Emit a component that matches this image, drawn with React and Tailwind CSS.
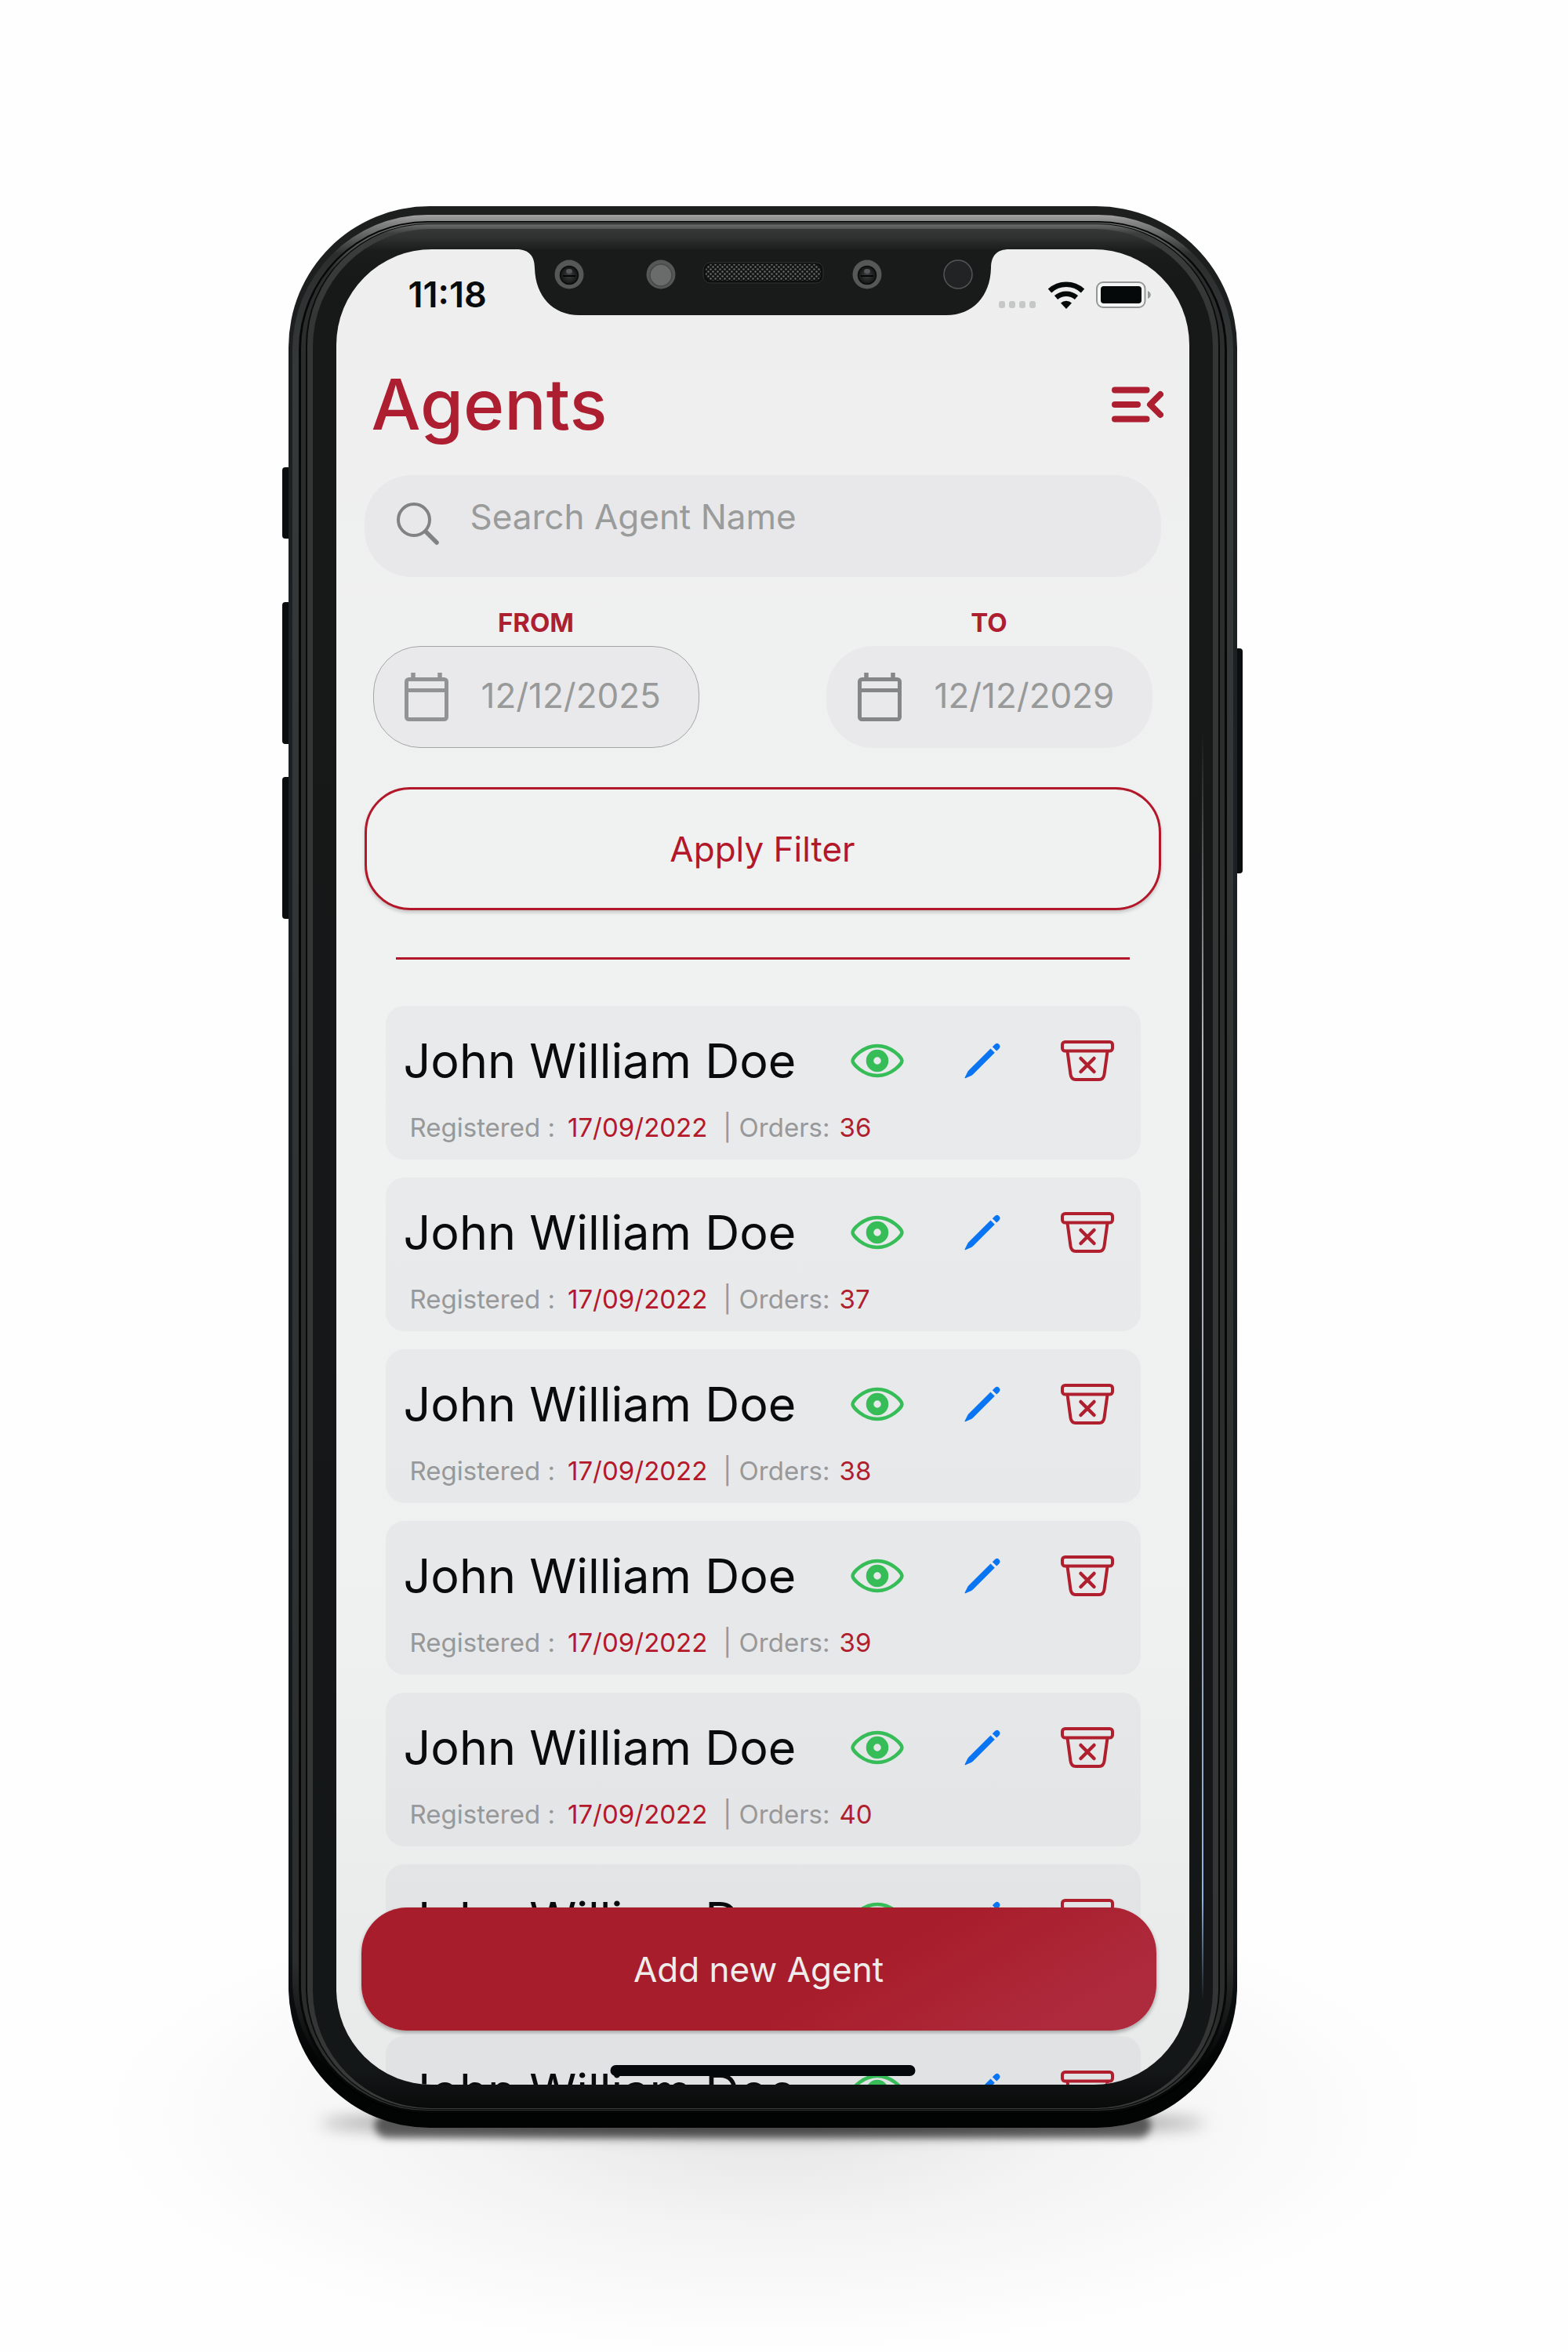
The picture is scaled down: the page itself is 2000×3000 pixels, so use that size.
import React from "react";

const agents = [36, 37, 38, 39, 40, 41, 42].map((orders) => ({
  name: "John William Doe",
  registered: "17/09/2022",
  orders,
}));

function Notch() {
  return (
    <svg viewBox="0 0 628 84" className="absolute top-0 left-1/2 w-[628px] -translate-x-1/2" aria-hidden="true">
      <defs>
        <pattern id="mesh" width="6" height="6" patternUnits="userSpaceOnUse">
          <rect width="6" height="6" fill="#131414" />
          <circle cx="1.5" cy="1.5" r="1.2" fill="#6b6b6b" />
          <circle cx="4.5" cy="4.5" r="1.2" fill="#6b6b6b" />
        </pattern>
        <radialGradient id="lens">
          <stop offset="0" stopColor="#3d3f40" />
          <stop offset="1" stopColor="#121313" />
        </radialGradient>
      </defs>
      <path d="M0 -1 V0 C16 0 23 9 23 24 C24 60 46 84 80 84 H548 C582 84 604 60 605 24 C605 9 612 0 628 0 V-1 Z" fill="#191b1b" />
      {[67, 447].map((x) => (
        <g key={x}>
          <circle cx={x} cy="32" r="18.5" fill="#565858" />
          <circle cx={x} cy="33" r="11.5" fill="url(#lens)" stroke="#0b0c0c" strokeWidth="1.5" />
          <ellipse cx={x} cy="28" rx="4" ry="3" fill="#55585a" />
          <path d={`M${x - 8} 34 H${x + 8}`} stroke="#050505" strokeWidth="2" />
        </g>
      ))}
      <circle cx="184" cy="32" r="18.5" fill="#565858" />
      <circle cx="184" cy="33" r="14" fill="#6a6c6c" stroke="#47494a" strokeWidth="1.5" />
      <rect x="238" y="17" width="153" height="26" rx="9" fill="#0e0f0f" stroke="#303131" strokeWidth="1" />
      <rect x="241" y="19" width="147" height="21" rx="8" fill="url(#mesh)" />
      <circle cx="563" cy="32" r="18" fill="#212324" stroke="#545657" strokeWidth="1.5" />
    </svg>
  );
}

function StatusIcons() {
  return (
    <svg viewBox="0 0 196 36" className="h-9 w-[196px]" aria-hidden="true">
      {[0, 13, 26, 39].map((x) => (
        <rect key={x} x={x + 2} y="26" width="8" height="9" rx="3" fill="#c6c7c7" />
      ))}
      <g fill="none" stroke="#060909" strokeWidth="6.5">
        <path d="M67 13 A31 31 0 0 1 109 13" />
        <path d="M75 21.5 A20 20 0 0 1 101 21.5" />
      </g>
      <path d="M88 36 L81 28.5 A10 10 0 0 1 95 28.5 Z" fill="#060909" />
      <rect x="127" y="2" width="61.5" height="32" rx="8" fill="#f4f5f5" stroke="#959696" strokeWidth="2" />
      <rect x="132" y="7" width="52" height="22" rx="4" fill="#060909" />
      <path d="M192 13 C197 15 197 21 192 23 Z" fill="#959696" />
    </svg>
  );
}

function MenuIcon() {
  return (
    <svg viewBox="0 0 66 46" className="h-[46px] w-[66px]" fill="none" stroke="#ad1f30" strokeWidth="8" strokeLinecap="round" strokeLinejoin="round">
      <path d="M4 4.5 H44.5" />
      <path d="M4 23 H33" />
      <path d="M4 41.5 H44.5" />
      <path d="M62 10 L49 23 L62 36" />
    </svg>
  );
}

function SearchIcon() {
  return (
    <svg viewBox="0 0 54 54" className="size-[54px] shrink-0" fill="none" stroke="#808283" strokeLinecap="round">
      <circle cx="22" cy="22" r="20" strokeWidth="4" />
      <path d="M37 37 L51 51" strokeWidth="5.5" />
    </svg>
  );
}

function CalendarIcon({ className }) {
  return (
    <svg viewBox="0 0 56 62" className={"h-[62px] w-14 shrink-0 " + className} fill="none" stroke="currentColor">
      <rect x="2.5" y="8.5" width="51" height="51" rx="3" strokeWidth="5" />
      <path d="M3 22.5 H53" strokeWidth="5" />
      <path d="M11 0 V7 M45 0 V7" strokeWidth="5.5" />
    </svg>
  );
}

function EyeIcon() {
  return (
    <svg viewBox="0 0 68 44" className="h-11 w-[68px]">
      <path
        d="M2.5 22 C2.5 18 16 3 34 3 C52 3 65.5 18 65.5 22 C65.5 26 52 41 34 41 C16 41 2.5 26 2.5 22 Z"
        fill="none"
        stroke="#36bd58"
        strokeWidth="4.5"
      />
      <circle cx="34" cy="22" r="9.5" fill="none" stroke="#36bd58" strokeWidth="9.5" />
    </svg>
  );
}

function PencilIcon() {
  return (
    <svg viewBox="0 0 46 46" className="size-[46px]" fill="#0a75f2">
      <path d="M33.5 7.5 L38.8 12.8 L11 40.5 Q10.2 41.3 9 41.9 L1.5 45.3 Q0 45.6 .7 44.2 L4.3 36.9 Q4.8 35.9 5.6 35.2 Z" />
      <path d="M35.8 5.2 L38.5 2.5 Q41.5 -.5 44.2 2 Q47 4.900 44 7.9 L41.2 10.6 Z" />
    </svg>
  );
}

function BinIcon() {
  return (
    <svg viewBox="0 0 68 52" className="h-[52px] w-[68px]" fill="none" stroke="#b01f2e" strokeLinecap="round" strokeLinejoin="round">
      <rect x="2" y="2" width="64" height="11.5" rx="3.5" strokeWidth="4" />
      <path d="M8.500 14 L12.5 43.5 Q13.5 50 19 50 H49 Q54.5 50 55.5 43.5 L59.5 14" strokeWidth="4" />
      <path d="M25.5 23 L42.5 40 M42.5 23 L25.5 40" strokeWidth="4.5" />
    </svg>
  );
}

function DateField({ id, label, value, boxClass, iconClass }) {
  return (
    <div className="flex w-[416px] flex-col items-center">
      <label htmlFor={id} className="mb-2.5 text-[33px] leading-10 font-bold text-[#ad1f30]">
        {label}
      </label>
      <div className={"flex h-[130px] w-full items-center gap-[42px] rounded-[60px] border bg-[#e9e9eb] pr-9 pl-[39px] " + boxClass}>
        <CalendarIcon className={iconClass} />
        <input id={id} type="text" defaultValue={value} className="w-full min-w-0 bg-transparent pb-1 text-[44px] text-[#989999] outline-none" />
      </div>
    </div>
  );
}

function AgentCard({ name, registered, orders }) {
  return (
    <li className="rounded-[24px] bg-[#a0a0b4]/9 pt-7 pr-[34px] pb-[21px] pl-[23px]">
      <div className="flex items-center gap-[66px]">
        <h2 className="min-w-0 flex-1 text-[61px] leading-[84px] whitespace-nowrap text-[#080c0c]">{name}</h2>
        <button type="button" aria-label="View agent" className="flex w-[68px] shrink-0 justify-center">
          <EyeIcon />
        </button>
        <button type="button" aria-label="Edit agent" className="flex w-[68px] shrink-0 justify-center">
          <PencilIcon />
        </button>
        <button type="button" aria-label="Delete agent" className="flex w-[68px] shrink-0 justify-center">
          <BinIcon />
        </button>
      </div>
      <p className="mt-[23px] flex pl-2 text-[33px] leading-10 whitespace-nowrap text-[#979899]">
        <span>Registered :</span>
        <span className="ml-4 text-[#b5182a]">{registered}</span>
        <span className="ml-5">| Orders:</span>
        <span className="ml-3 text-[#b01f2e]">{orders}</span>
      </p>
    </li>
  );
}

function Screen() {
  return (
    <div className="relative aspect-[1088/2341] overflow-hidden rounded-[122px] bg-[linear-gradient(180deg,#eeeeee_0%,#f0f2f1_45%,#eff0f0_75%,#e8e9e9_100%)]">
      <div className="flex h-[116px] items-center justify-between pr-[49px] pl-[92px]">
        <span className="text-[45px] font-semibold text-[#080b0b]">11:18</span>
        <StatusIcons />
      </div>
      <Notch />

      <header className="mt-[34px] flex items-center justify-between pr-[33px] pl-[45px]">
        <h1 className="text-[89px] leading-[96px] font-medium text-[#ad1f30]">Agents</h1>
        <button type="button" aria-label="Open menu">
          <MenuIcon />
        </button>
      </header>

      <main>
        <form className="px-9" onSubmit={(e) => e.preventDefault()}>
          <label className="mt-[42px] flex h-[130px] items-center gap-10 rounded-[60px] bg-[#e8e8ea] px-[41px] pb-1.5">
            <SearchIcon />
            <input
              type="text"
              aria-label="Search Agent Name"
              placeholder="Search Agent Name"
              className="w-full min-w-0 bg-transparent pb-[18px] text-[44px] outline-none placeholder:text-[#9a9b9b]"
            />
          </label>

          <div className="mt-[38px] flex justify-between px-[11px]">
            <DateField id="from" label="FROM" value="12/12/2025" boxClass="border-[#a4a6a6]" iconClass="text-[#929494]" />
            <DateField id="to" label="TO" value="12/12/2029" boxClass="border-transparent" iconClass="text-[#858686]" />
          </div>

          <button
            type="submit"
            className="mt-[50px] h-[157px] w-full rounded-[58px] border-[3px] border-[#b3182a] bg-[#f0f2f1] text-[44px] text-[#b3182a] shadow-[0_3px_4px_rgba(0,0,0,0.18)]"
          >
            Apply Filter
          </button>
        </form>

        <hr className="mx-[76px] mt-[60px] h-[3px] border-0 bg-[#b3182a]" />

        <ul className="mt-[59px] flex flex-col gap-[23px] pr-[62px] pl-[63px]">
          {agents.map((agent) => (
            <AgentCard key={agent.orders} {...agent} />
          ))}
        </ul>
      </main>

      <button
        type="button"
        className="absolute right-[42px] bottom-[69px] left-8 h-[157px] rounded-[58px] bg-[linear-gradient(150deg,#a81d2b_60%,#ae2b3d_90%)] text-[44px] text-[#efecec] shadow-[0_3px_5px_rgba(0,0,0,0.3)]"
      >
        Add new Agent
      </button>
      <div className="absolute bottom-[11px] left-1/2 h-[14px] w-[389px] -translate-x-1/2 rounded-full bg-[#04080a]" />
    </div>
  );
}

function Phone() {
  return (
    <div className="relative w-full max-w-[1210px]">
      <div className="absolute right-10 -bottom-[10px] left-10 h-8 rounded-[50%] bg-black/35 blur-[10px]" />
      <div className="absolute right-[110px] -bottom-[13px] left-[110px] h-8 rounded-full bg-black/55 blur-[5px]" />
      <div className="absolute top-[333px] -left-2 h-[91px] w-4 rounded bg-[#0b0e0e]" />
      <div className="absolute top-[505px] -left-2 h-[181px] w-4 rounded bg-[#0b0e0e]" />
      <div className="absolute top-[728px] -left-2 h-[181px] w-4 rounded bg-[#0b0e0e]" />
      <div className="absolute top-[564px] -right-[7px] h-[287px] w-4 rounded bg-[#0b0e0e]" />

      <div className="relative rounded-[180px] bg-[linear-gradient(180deg,#1d1f1e_0%,#1b2124_30%,#12171a_90%,#020303_97%)] px-[5px] pt-[11px] pb-[18px]">
        <div className="rounded-[172px] bg-[linear-gradient(180deg,#a2a2a2_0px,#8a8a8a_8px,#2c2e2e_50px,#35393a_200px,#2c2e2e_92%,#000_98%)] px-2 pt-2 pb-px">
          <div className="rounded-[164px] bg-[#060707] px-[3px] pt-0.5 pb-[3px]">
            <div className="rounded-[161px] bg-[linear-gradient(180deg,#777_0px,#2b2d2d_60px,#2b2d2d_96%,#333_100%)] px-1.5 pt-px pb-px">
              <div className="rounded-[156px] bg-[#080909] px-0.5 pt-px pb-px">
                <div className="rounded-[154px] bg-[linear-gradient(180deg,#6a6a6a_0px,#3c3d3d_12px,#343535_120px,#343535_96%,#3a3b3b_100%)] px-[7px] pt-1.5 pb-px">
                  <div className="relative rounded-[150px] bg-[linear-gradient(180deg,#363737_0px,#2e3030_12px,#1a1c1c_28px,#161918_60px,#141717_98%,#090b0b_100%)] px-[30px] pt-[26px] pb-[30px]">
                    <div className="absolute top-[640px] right-3 h-[1620px] w-0.5 bg-[linear-gradient(180deg,transparent,#b9babd_25%,#9aa3b4_70%,#8fb0e0_92%,transparent)]" />
                    <Screen />
                  </div>
                </div>
              </div>
            </div>
          </div>
        </div>
      </div>
    </div>
  );
}

export default function App() {
  return (
    <div className="flex min-h-screen flex-col items-center overflow-hidden bg-[radial-gradient(ellipse_850px_300px_at_49%_2700px,#e4e4e4_0%,#f3f3f3_45%,#fefefe_100%)] pt-[263px] pr-[55px] font-['Inter',sans-serif]">
      <Phone />
    </div>
  );
}
